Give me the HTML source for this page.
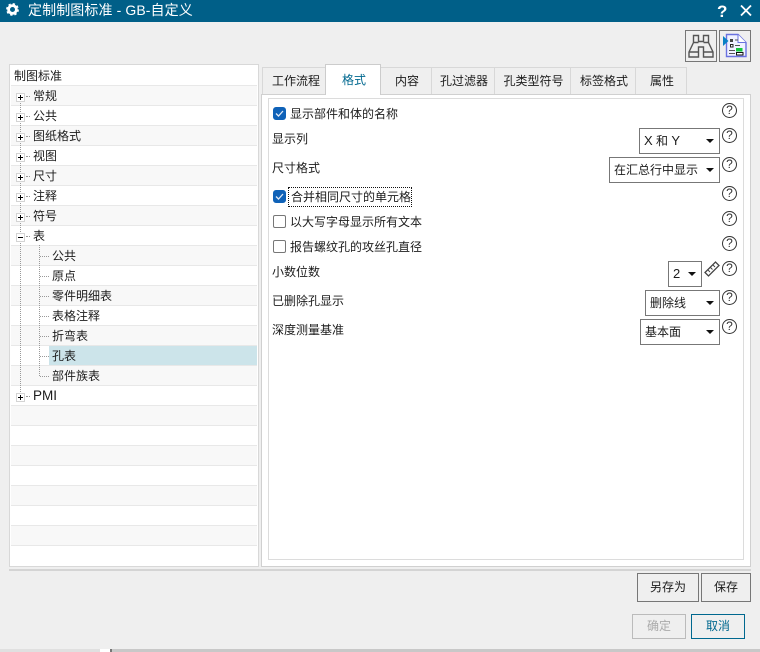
<!DOCTYPE html>
<html><head><meta charset="utf-8">
<style>
html,body{margin:0;padding:0}
body{width:760px;height:652px;overflow:hidden;background:#efefef;position:relative;font-family:"Liberation Sans","Noto Sans CJK SC",sans-serif;font-size:12px;color:#1c1c1c}
div,span{position:absolute;box-sizing:border-box;white-space:nowrap}
svg{position:absolute;overflow:visible}
.row{left:11px;width:246px;height:20px;border-bottom:1px solid #e8e8e8}
.alt{background:#f8f8f8}
.t{line-height:20px;height:20px}
.exp{left:16px;width:9px;height:9px;border:1px solid #d4d4d4;background:#fff}
.exp:before{content:"";position:absolute;left:1px;top:3px;width:5px;height:1px;background:#000}
.plus:after{content:"";position:absolute;left:3px;top:1px;width:1px;height:5px;background:#000}
.hd{height:1px;border-top:1px dotted #999}
.vd{width:1px;border-left:1px dotted #999}
.tab{top:67px;height:27px;background:#efefef;border:1px solid #d8d8d8;border-bottom:none;text-align:center;line-height:26px;padding-left:2px}
.cb{left:273px;width:13px;height:13px;border:1px solid #777;border-radius:2px;background:#fff}
.cb.on{background:#0f62b8;border-color:#0f62b8;border-radius:3px}
.sel{height:26px;border:1px solid #777;background:#fff;line-height:24px;padding-left:4px}
.sel:after{content:"";position:absolute;right:5px;top:10px;border-left:4px solid transparent;border-right:4px solid transparent;border-top:4px solid #111}
.q{width:15px;height:15px;border:1px solid #333;border-radius:50%;text-align:center;line-height:13px;font-size:12px;color:#333;background:#fff}
.btn{height:29px;border:1px solid #777;text-align:center;line-height:27px;background:#efefef}
.l{position:static;font-size:13px}
</style></head>
<body>
<div style="left:0;top:0;width:760px;height:22px;background:#005f88"></div>
<svg style="left:6px;top:3px" width="14" height="14" viewBox="0 0 14 14"><circle cx="6.500" cy="6.500" r="3.900" fill="none" stroke="#fff" stroke-width="2.800"/><circle cx="6.500" cy="6.500" r="5.700" fill="none" stroke="#fff" stroke-width="1.400" stroke-dasharray="2.400 2.080"/></svg>
<div style="left:28px;top:0;line-height:21px;font-size:14px;color:#fff;letter-spacing:.1px">定制制图标准 - GB-自定义</div>
<div style="left:717px;top:0;line-height:23px;font-size:17px;font-weight:bold;color:#fff">?</div>
<svg style="left:740px;top:5px" width="12" height="12" viewBox="0 0 12 12"><path d="M1 .5L11 10.5M11 .5L1 10.5" stroke="#fff" stroke-width="1.800"/></svg>

<div style="left:685px;top:30px;width:32px;height:32px;border:1px solid #777"></div>
<svg style="left:688px;top:34px" width="26" height="24" viewBox="0 0 26 24" fill="none" stroke="#555" stroke-width="1.400"><path d="M5.500 1.500h5v6h5v-6h5v7l4.500 9.500v5h-9.500v-10h-5v10H1v-5L5.500 8.500zM1 18h9.500M15.500 18H25M5.500 8.500h5M15.500 8.500h5"/></svg>
<div style="left:719px;top:30px;width:32px;height:32px;border:1px solid #777"></div>
<svg style="left:722px;top:33px" width="26" height="26" viewBox="0 0 26 26"><path d="M4.500 1.500H16l8 8v14H4.500z" fill="#f0f2ff" stroke="#6a72e0" stroke-width="1.400"/><path d="M16 1.500v8h8" fill="#fff" stroke="#6a72e0"/><path d="M1 3l5.500 5L1 13z" fill="#0a80c4"/><rect x="8" y="6" width="3" height="3" fill="#444"/><rect x="8.500" y="11.500" width="2.500" height="2.500" fill="#fff" stroke="#222"/><path d="M13 7h3M13 12.500h5M7 17.500h6M7 20.500h6" stroke="#555"/><rect x="14" y="15" width="6.500" height="3.500" fill="#14c83c"/><rect x="14.500" y="19.500" width="6.500" height="2.500" fill="#fff" stroke="#111"/></svg>

<!-- tree -->
<div style="left:9px;top:64px;width:250px;height:503px;background:#fff;border:1px solid #d8d8d8"></div>
<div class="row" style="top:66px"></div>
<div class="row alt" style="top:86px"></div><div class="row" style="top:106px"></div><div class="row alt" style="top:126px"></div><div class="row" style="top:146px"></div><div class="row alt" style="top:166px"></div><div class="row" style="top:186px"></div><div class="row alt" style="top:206px"></div><div class="row" style="top:226px"></div><div class="row alt" style="top:246px"></div><div class="row" style="top:266px"></div><div class="row alt" style="top:286px"></div><div class="row" style="top:306px"></div><div class="row alt" style="top:326px"></div><div class="row" style="top:346px"></div><div class="row alt" style="top:366px"></div><div class="row" style="top:386px"></div><div class="row alt" style="top:406px"></div><div class="row" style="top:426px"></div><div class="row alt" style="top:446px"></div><div class="row" style="top:466px"></div><div class="row alt" style="top:486px"></div><div class="row" style="top:506px"></div><div class="row alt" style="top:526px"></div>
<div style="left:49px;top:346px;width:208px;height:19px;background:#cce4ea"></div>

<div class="vd" style="left:20px;top:100px;height:296px"></div>
<div class="vd" style="left:39px;top:245px;height:131px"></div>
<div class="hd" style="left:26px;top:96px;width:4px"></div><div class="hd" style="left:26px;top:116px;width:4px"></div><div class="hd" style="left:26px;top:136px;width:4px"></div><div class="hd" style="left:26px;top:156px;width:4px"></div><div class="hd" style="left:26px;top:176px;width:4px"></div><div class="hd" style="left:26px;top:196px;width:4px"></div><div class="hd" style="left:26px;top:216px;width:4px"></div><div class="hd" style="left:26px;top:236px;width:4px"></div><div class="hd" style="left:26px;top:396px;width:4px"></div>
<div class="hd" style="left:40px;top:256px;width:9px"></div><div class="hd" style="left:40px;top:276px;width:9px"></div><div class="hd" style="left:40px;top:296px;width:9px"></div><div class="hd" style="left:40px;top:316px;width:9px"></div><div class="hd" style="left:40px;top:336px;width:9px"></div><div class="hd" style="left:40px;top:356px;width:9px"></div><div class="hd" style="left:40px;top:376px;width:9px"></div>

<div class="exp plus" style="top:93px"></div><div class="exp plus" style="top:113px"></div><div class="exp plus" style="top:133px"></div><div class="exp plus" style="top:153px"></div><div class="exp plus" style="top:173px"></div><div class="exp plus" style="top:193px"></div><div class="exp plus" style="top:213px"></div><div class="exp" style="top:233px"></div><div class="exp plus" style="top:393px"></div>

<div class="t" style="left:14px;top:66px">制图标准</div>
<div class="t" style="left:33px;top:86px">常规</div>
<div class="t" style="left:33px;top:106px">公共</div>
<div class="t" style="left:33px;top:126px">图纸格式</div>
<div class="t" style="left:33px;top:146px">视图</div>
<div class="t" style="left:33px;top:166px">尺寸</div>
<div class="t" style="left:33px;top:186px">注释</div>
<div class="t" style="left:33px;top:206px">符号</div>
<div class="t" style="left:33px;top:226px">表</div>
<div class="t" style="left:52px;top:246px">公共</div>
<div class="t" style="left:52px;top:266px">原点</div>
<div class="t" style="left:52px;top:286px">零件明细表</div>
<div class="t" style="left:52px;top:306px">表格注释</div>
<div class="t" style="left:52px;top:326px">折弯表</div>
<div class="t" style="left:52px;top:346px">孔表</div>
<div class="t" style="left:52px;top:366px">部件族表</div>
<div class="t" style="left:33px;top:386px;font-size:13.500px">PMI</div>

<!-- panel -->
<div style="left:261px;top:94px;width:490px;height:473px;background:#fff;border:1px solid #d0d0d0"></div>
<div style="left:268px;top:98px;width:476px;height:462px;background:#fff;border:1px solid #dcdcdc"></div>

<div class="tab" style="left:262px;width:64px;padding-left:4px">工作流程</div>
<div class="tab" style="left:325px;top:64px;width:56px;height:31px;background:#fff;border-color:#ccc;color:#00688f;line-height:31px;z-index:2">格式</div>
<div class="tab" style="left:380px;width:52px">内容</div>
<div class="tab" style="left:431px;width:64px">孔过滤器</div>
<div class="tab" style="left:494px;width:77px">孔类型符号</div>
<div class="tab" style="left:570px;width:66px">标签格式</div>
<div class="tab" style="left:635px;width:52px">属性</div>

<div class="cb on" style="top:107px"></div>
<div class="cb on" style="top:190px"></div>
<div class="cb" style="top:215px"></div>
<div class="cb" style="top:240px"></div>
<svg style="left:273px;top:107px" width="13" height="13"><path d="M3 6.500L5.500 9 10 4" fill="none" stroke="#dfe9f7" stroke-width="1.300"/></svg>
<svg style="left:273px;top:190px" width="13" height="13"><path d="M3 6.500L5.500 9 10 4" fill="none" stroke="#dfe9f7" stroke-width="1.300"/></svg>

<div class="t" style="left:290px;top:104px">显示部件和体的名称</div>
<div class="t" style="left:272px;top:129px">显示列</div>
<div class="t" style="left:272px;top:158px">尺寸格式</div>
<div class="t" style="left:288px;top:187px;width:124px;height:20px;padding-left:2px;border:1px dotted #111;line-height:18px">合并相同尺寸的单元格</div>
<div class="t" style="left:290px;top:212px">以大写字母显示所有文本</div>
<div class="t" style="left:290px;top:237px">报告螺纹孔的攻丝孔直径</div>
<div class="t" style="left:272px;top:262px">小数位数</div>
<div class="t" style="left:272px;top:291px">已删除孔显示</div>
<div class="t" style="left:272px;top:320px">深度测量基准</div>

<div class="sel" style="left:639px;top:128px;width:81px"><span class="l">X</span> 和 <span class="l">Y</span></div>
<div class="sel" style="left:609px;top:157px;width:111px">在汇总行中显示</div>
<div class="sel" style="left:668px;top:261px;width:34px"><span class="l">2</span></div>
<div class="sel" style="left:645px;top:290px;width:75px">删除线</div>
<div class="sel" style="left:640px;top:319px;width:80px">基本面</div>

<svg style="left:704px;top:261px" width="16" height="16" viewBox="0 0 16 16"><path d="M1 11.500L11.500 1 15 4.500 4.500 15z" fill="#fff" stroke="#444" stroke-width="1.300"/><path d="M4 9l2 2M6.500 6.500l2 2M9 4l2 2" stroke="#444"/></svg>

<div class="q" style="left:722px;top:103px">?</div>
<div class="q" style="left:722px;top:128px">?</div>
<div class="q" style="left:722px;top:157px">?</div>
<div class="q" style="left:722px;top:186px">?</div>
<div class="q" style="left:722px;top:211px">?</div>
<div class="q" style="left:722px;top:236px">?</div>
<div class="q" style="left:722px;top:261px">?</div>
<div class="q" style="left:722px;top:290px">?</div>
<div class="q" style="left:722px;top:319px">?</div>

<div style="left:9px;top:569px;width:742px;height:2px;background:#d4d4d4"></div>
<div class="btn" style="left:637px;top:573px;width:62px">另存为</div>
<div class="btn" style="left:701px;top:573px;width:50px">保存</div>
<div class="btn" style="left:632px;top:614px;width:54px;height:25px;line-height:23px;border-color:#bbb;color:#aaa">确定</div>
<div class="btn" style="left:691px;top:614px;width:54px;height:25px;line-height:23px;border-color:#00688f;color:#00688f">取消</div>

<div style="left:0;top:649px;width:100px;height:3px;background:#e0e0e0"></div>
<div style="left:100px;top:649px;width:10px;height:3px;background:#fff"></div>
<div style="left:110px;top:649px;width:650px;height:3px;background:#c8c8c8"></div>
<div style="left:110px;top:649px;width:2px;height:3px;background:#777"></div>
</body></html>
